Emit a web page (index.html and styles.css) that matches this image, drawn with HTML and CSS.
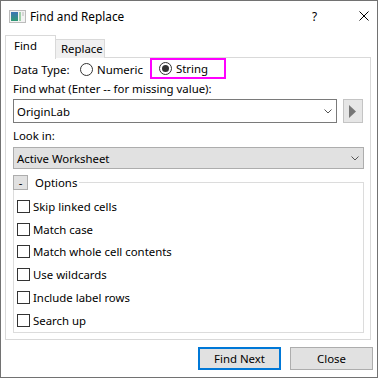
FILE: index.html
```html
<!DOCTYPE html>
<html>
<head>
<meta charset="utf-8">
<link rel="stylesheet" href="styles.css">
</head>
<body>
<div class="window">
  <div class="titlebar">
    <svg class="appicon" width="17" height="13" viewBox="0 0 17 13">
      <defs>
        <linearGradient id="ig" x1="0" y1="0" x2="0" y2="1">
          <stop offset="0" stop-color="#3b74b5"/>
          <stop offset="1" stop-color="#2f9a74"/>
        </linearGradient>
      </defs>
      <rect x="0.5" y="0.5" width="16" height="12" fill="#f3f3f3" stroke="#bcbcbc"/>
      <rect x="2" y="2" width="7" height="9" fill="url(#ig)"/>
      <rect x="10" y="2" width="2" height="9" fill="#9fd0a8"/>
      <rect x="13" y="2" width="2" height="4" fill="#d6d6d6"/>
    </svg>
    <span class="title">Find and Replace</span>
    <span class="help">?</span>
    <svg class="closex" width="10" height="10" viewBox="0 0 10 10">
      <path d="M0.5 0.5 L9.5 9.5 M9.5 0.5 L0.5 9.5" stroke="#000" stroke-width="1" fill="none"/>
    </svg>
  </div>

  <div class="tabs">
    <div class="tab active">Find</div>
    <div class="tab">Replace</div>
  </div>

  <div class="panel">
    <div class="datatype">
      <span class="dt-label">Data Type:</span>
      <span class="radio numeric"><span class="circle"></span>Numeric</span>
      <span class="radio string"><span class="circle on"></span>String</span>
    </div>

    <div class="label find-label">Find what (Enter -- for missing value):</div>
    <div class="findrow">
      <div class="combo">
        <span class="value">OriginLab</span>
        <svg class="chev" width="8" height="5" viewBox="0 0 8 5"><path d="M0.5 0.5 L4 4 L7.5 0.5" stroke="#555" fill="none"/></svg>
      </div>
      <div class="arrowbtn">
        <svg width="8" height="13" viewBox="0 0 8 13"><path d="M0 0 L7 6.5 L0 13 Z" fill="#767676"/></svg>
      </div>
    </div>

    <div class="label look-label">Look in:</div>
    <div class="select">
      <span class="value">Active Worksheet</span>
      <svg class="chev" width="8" height="5" viewBox="0 0 8 5"><path d="M0.5 0.5 L4 4 L7.5 0.5" stroke="#555" fill="none"/></svg>
    </div>

    <fieldset class="options">
      <legend><span class="toggle">-</span><span class="opt-text">Options</span></legend>
      <div class="check"><span class="box"></span>Skip linked cells</div>
      <div class="check"><span class="box"></span>Match case</div>
      <div class="check"><span class="box"></span>Match whole cell contents</div>
      <div class="check"><span class="box"></span>Use wildcards</div>
      <div class="check"><span class="box"></span>Include label rows</div>
      <div class="check"><span class="box"></span>Search up</div>
    </fieldset>
  </div>

  <div class="buttons">
    <div class="btn default">Find Next</div>
    <div class="btn">Close</div>
  </div>
</div>
</body>
</html>
```

FILE: styles.css
```css
* { box-sizing: border-box; }
html, body { margin: 0; padding: 0; background: #fff; }
body {
  font-family: "Noto Sans", "Open Sans", sans-serif;
  font-size: 11.4px;
  color: #000;
}
.window {
  width: 378px;
  height: 378px;
  border: 1px solid #727272;
  background: #fff;
  display: flex;
  flex-direction: column;
}
.titlebar {
  height: 30px;
  display: flex;
  align-items: center;
  padding-left: 8px;
  flex: none;
}
.appicon { display: block; }
.title { margin-left: 4px; font-size: 11.8px; line-height: 16px; }
.help { margin-left: auto; font-size: 11.8px; width: 10px; margin-right: 37px; }
.closex { margin-right: 8px; display: block; }

.tabs {
  display: flex;
  align-items: flex-end;
  margin-top: 4px;
  margin-left: 4px;
  height: 23px;
  margin-bottom: -1px;
  flex: none;
}
.tab {
  position: relative;
  z-index: 1;
  border: 1px solid #d9d9d9;
  border-bottom: none;
  background: #f0f0f0;
  height: 19px;
  width: 49px;
  padding-left: 5px;
  line-height: 18px;
}
.tab.active {
  background: #fff;
  height: 24px;
  width: 51px;
  padding-left: 8px;
  line-height: 20px;
  margin-bottom: -1px;
}
.tab + .tab { border-left: none; }

.panel {
  margin-left: 4px;
  width: 366px;
  height: 283px;
  border: 1px solid #d9d9d9;
  padding: 0 6px 0 7px;
  flex: none;
}
.datatype {
  height: 22px;
  display: flex;
  align-items: center;
}
.dt-label { width: 67px; }
.radio { display: flex; align-items: center; }
.numeric { width: 70px; }
.string {
  width: 76px;
  height: 21px;
  border: 2px solid #ff00ff;
  padding-left: 7px;
  align-self: flex-start;
}
.circle {
  width: 13px;
  height: 13px;
  border: 1px solid #333;
  border-radius: 50%;
  margin-right: 4px;
  display: flex;
  align-items: center;
  justify-content: center;
  flex: none;
}
.circle.on::after {
  content: "";
  width: 7px;
  height: 7px;
  border-radius: 50%;
  background: #333;
}
.label { height: 16px; line-height: 16px; }
.find-label { margin-top: 1px; }
.findrow { display: flex; margin-top: 2px; height: 24px; }
.combo {
  width: 324px;
  height: 24px;
  border: 1px solid #7a7a7a;
  display: flex;
  align-items: center;
  padding-left: 3px;
  padding-right: 4px;
}
.value { flex: 1; }
.chev { display: block; }
.arrowbtn {
  margin-left: 6px;
  width: 20px;
  height: 24px;
  background: #e6e6e6;
  border: 1px solid #c4c4c4;
  display: flex;
  align-items: center;
  justify-content: center;
}
.look-label { margin-top: 5px; }
.select {
  margin-top: 3px;
  width: 351px;
  height: 22px;
  background: #e1e1e1;
  border: 1px solid #adadad;
  display: flex;
  align-items: center;
  padding-left: 3px;
  padding-right: 4px;
}
.options {
  margin: 5px 0 0 0;
  width: 351px;
  height: 159px;
  border: 1px solid #dcdcdc;
  padding: 0;
}
.options legend {
  padding: 0 2px 0 0;
  margin-left: -1px;
  display: flex;
  align-items: center;
  height: 16px;
}
.toggle {
  width: 15px;
  height: 15px;
  background: #e1e1e1;
  border: 1px solid #adadad;
  display: flex;
  align-items: center;
  justify-content: center;
  line-height: 13px;
}
.opt-text { margin-left: 7px; }
.check {
  height: 22.8px;
  display: flex;
  align-items: center;
  padding-left: 3px;
}
.check:first-of-type { margin-top: 5px; }
.box {
  width: 13px;
  height: 13px;
  border: 1px solid #333;
  background: #fff;
  margin-right: 3px;
  flex: none;
}
.buttons {
  display: flex;
  justify-content: flex-end;
  gap: 9px;
  margin-top: 7px;
  padding-right: 4px;
}
.btn {
  width: 83px;
  height: 23px;
  background: #e1e1e1;
  border: 1px solid #adadad;
  display: flex;
  align-items: center;
  justify-content: center;
}
.btn.default { border: 2px solid #0078d7; }
```
